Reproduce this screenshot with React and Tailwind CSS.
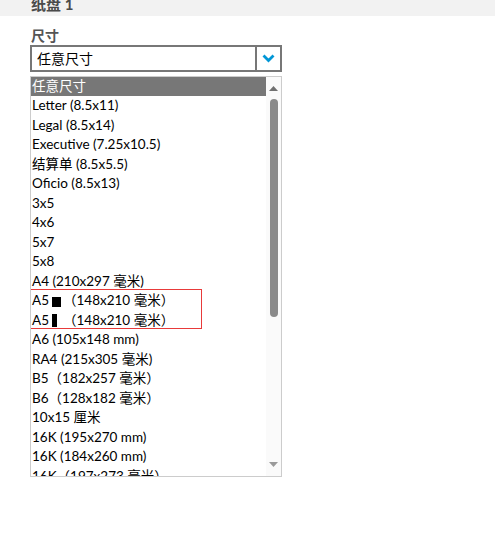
import React from "react";

const sizes = [
  "Letter (8.5x11)",
  "Legal (8.5x14)",
  "Executive (7.25x10.5)",
  "结算单 (8.5x5.5)",
  "Oficio (8.5x13)",
  "3x5",
  "4x6",
  "5x7",
  "5x8",
  "A4 (210x297 毫米)",
];

const sizesAfter = [
  "A6 (105x148 mm)",
  "RA4 (215x305 毫米)",
  "B5（182x257 毫米）",
  "B6（128x182 毫米）",
  "10x15 厘米",
  "16K (195x270 mm)",
  "16K (184x260 mm)",
  "16K（197x273 毫米）",
];

const font = { fontFamily: 'Lato, "Noto Sans CJK SC", sans-serif' };

export default function App() {
  return (
    <div className="w-[495px] h-[537px] bg-white text-black" style={font}>
      {/* Tray header */}
      <div className="h-[16px] bg-[#f2f2f2] overflow-hidden pl-[31px]">
        <div className="text-[15px] font-bold text-[#4a4a4a] leading-[16px] -mt-[4px]">
          纸盘 1
        </div>
      </div>

      <div className="pl-[30px] pt-[12px]">
        <div className="text-[14px] font-bold text-[#555] leading-[16px] pl-[1px]">
          尺寸
        </div>

        {/* Select */}
        <div className="mt-[1px] w-[252px] h-[27px] border-2 border-[#777] flex">
          <div className="flex-1 pl-[5px] text-[14px] leading-[23px]">任意尺寸</div>
          <div className="w-[25px] border-l-2 border-[#777] flex items-center justify-center">
            <svg width="13" height="9" viewBox="0 0 13 9">
              <path d="M1.5 1.5 L6.5 6.5 L11.5 1.5" fill="none" stroke="#0096d6" strokeWidth="2.8" />
            </svg>
          </div>
        </div>

        {/* List box */}
        <div className="relative mt-[4px] w-[252px] h-[401px] border border-[#ccc] flex overflow-hidden">
          <div className="flex-1 overflow-hidden text-[13.5px] leading-[19.5px]">
            <div className="bg-[#777] text-white pl-[1px] h-[19px] leading-[19px]">任意尺寸</div>
            {sizes.map((s) => (
              <div key={s} className="pl-[1px] whitespace-nowrap">
                {s}
              </div>
            ))}
            <div className="pl-[1px] whitespace-nowrap flex items-center">
              <span>A5</span>
              <span className="inline-block w-[9px] h-[10px] bg-black ml-[3px] mt-[2px]"></span>
              <span className="ml-[2px]">（148x210 毫米）</span>
            </div>
            <div className="pl-[1px] whitespace-nowrap flex items-center">
              <span>A5</span>
              <span className="inline-block w-[5px] h-[13px] bg-black ml-[3px] mt-[1px]"></span>
              <span className="ml-[6px]">（148x210 毫米）</span>
            </div>
            {sizesAfter.map((s) => (
              <div key={s} className="pl-[1px] whitespace-nowrap">
                {s}
              </div>
            ))}
          </div>

          {/* Scrollbar */}
          <div className="w-[15px] bg-[#fafafa] flex flex-col items-center">
            <svg className="mt-[9px]" width="9" height="5" viewBox="0 0 9 5">
              <path d="M0 5 L4.5 0 L9 5 Z" fill="#707070" />
            </svg>
            <div className="mt-[8px] w-[8px] h-[218px] rounded-full bg-[#8a8a8a]"></div>
            <div className="flex-1"></div>
            <svg className="mb-[9px]" width="9" height="5" viewBox="0 0 9 5">
              <path d="M0 0 L9 0 L4.5 5 Z" fill="#9a9a9a" />
            </svg>
          </div>

          {/* Highlight around A5 rows */}
          <div className="absolute left-[-5px] top-[212px] w-[176px] h-[40px] border border-[#e83a3a]"></div>
        </div>
      </div>
    </div>
  );
}
